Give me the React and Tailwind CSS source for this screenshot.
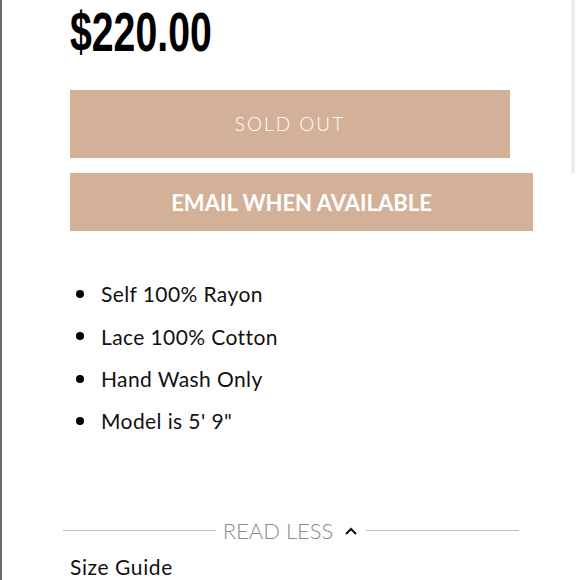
import React from "react";

export default function App() {
  const items = ["Self 100% Rayon", "Lace 100% Cotton", "Hand Wash Only", "Model is 5' 9\""];
  return (
    <div className="relative w-[580px] h-[580px] overflow-hidden bg-white border-l-2 border-[#6b6b6b]">
      <div className="absolute right-[5px] top-0 w-[4px] h-[173px] bg-[#ececec]" />
      <div className="flex flex-col pl-[68px]">
        <div className="pt-[5px] h-[90px]">
          <span className="inline-block origin-left scale-x-[0.74] scale-y-[1.04] text-[53px] leading-[53px] font-bold text-black [font-family:'Liberation_Sans_Narrow','Liberation_Sans',sans-serif]">
            $220.00
          </span>
        </div>
        <button className="w-[440px] h-[68px] bg-[#d3b199] flex items-center justify-center text-white text-[19px] tracking-[2px] font-light [font-family:Lato,sans-serif]">
          SOLD OUT
        </button>
        <button className="mt-[15px] w-[463px] h-[58px] bg-[#d3b199] flex items-center justify-center text-white text-[22px] font-bold [font-family:Lato,sans-serif]">
          EMAIL WHEN AVAILABLE
        </button>
        <ul className="mt-[42px] flex flex-col [font-family:Lato,sans-serif] text-[21px] tracking-[0.4px] text-[#111]">
          {items.map((t) => (
            <li key={t} className="flex items-center h-[42.3px]">
              <span className="ml-[6px] w-[8px] h-[8px] rounded-full bg-black" />
              <span className="ml-[17px]">{t}</span>
            </li>
          ))}
        </ul>
      </div>
      <div className="absolute left-[61px] top-[514px] w-[456px] flex items-center [font-family:Lato,sans-serif]">
        <div className="flex-1 h-px bg-[#bdbdbd]" />
        <span className="mx-[7px] text-[22px] font-light text-[#8a8a8a]">READ LESS</span>
        <svg width="14" height="10" viewBox="0 0 14 10" className="ml-[4px] mr-[8px]">
          <path d="M2 8 L7 3 L12 8" fill="none" stroke="#111" strokeWidth="2" />
        </svg>
        <div className="flex-1 h-px bg-[#bdbdbd]" />
      </div>
      <div className="absolute left-[68px] top-[551px] text-[21px] tracking-[0.6px] text-[#111] [font-family:Lato,sans-serif]">
        Size Guide
      </div>
    </div>
  );
}
